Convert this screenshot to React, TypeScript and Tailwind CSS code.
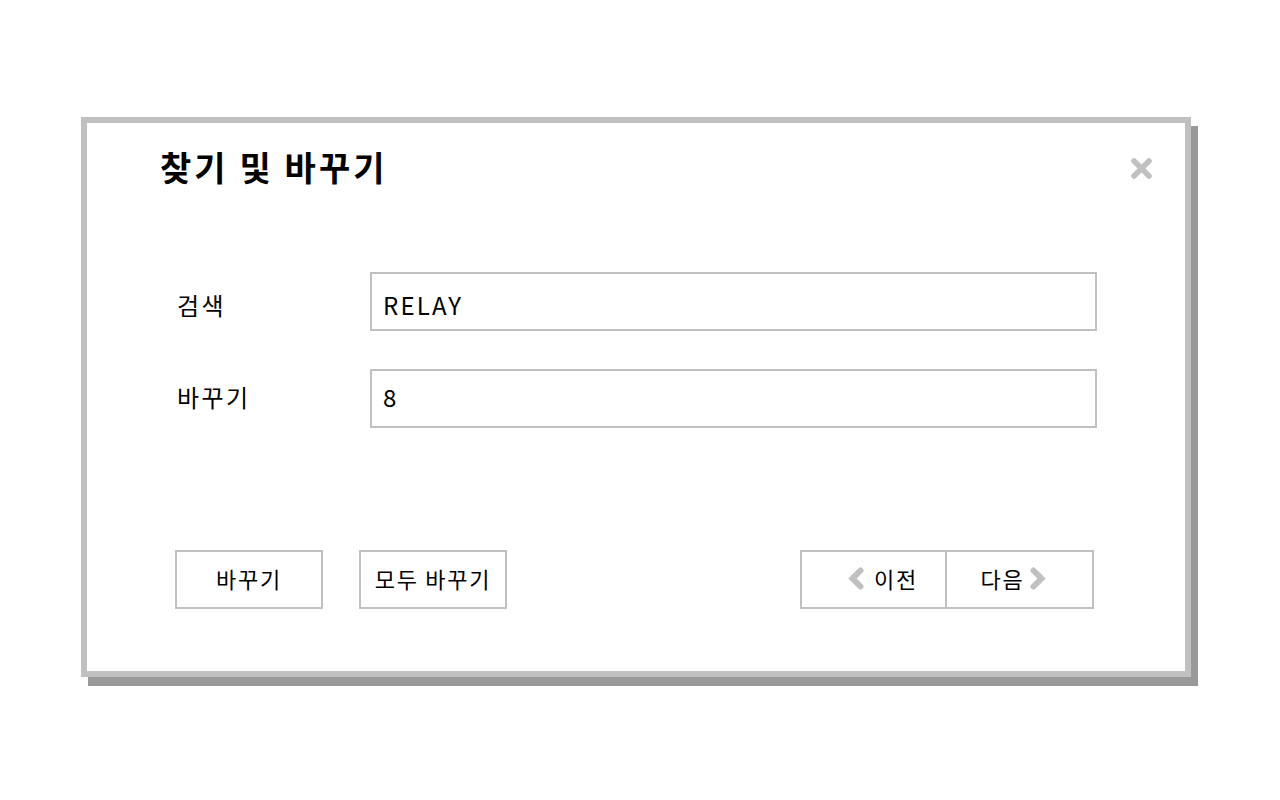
const font = { fontFamily: '"Noto Sans CJK KR", "Noto Sans", sans-serif' };

function Field({ label, value, low }: { label: string; value: string; low?: boolean }) {
  const nudge = low ? 'pt-[7px]' : 'pb-[3px]';
  return (
    <div className="flex items-center">
      <div className={`w-[283px] pl-[90px] text-[24px] leading-[30px] tracking-[0.1em] text-black ${nudge}`}>
        {label}
      </div>
      <div
        className={`flex h-[59px] w-[727px] items-center border-2 border-[#c0c0c0] px-[11px] text-[24px] tracking-[0.09em] text-black ${nudge}`}
      >
        {value}
      </div>
    </div>
  );
}

function Chevron({ dir }: { dir: 'left' | 'right' }) {
  return (
    <svg width="17" height="23" viewBox="0 0 17 23" className="shrink-0">
      <path
        d={dir === 'left' ? 'M13.5 3.5 L5.5 11.5 L13.5 19.5' : 'M3.5 3.5 L11.5 11.5 L3.5 19.5'}
        fill="none"
        stroke="#c0c0c0"
        strokeWidth="6"
        strokeLinecap="round"
      />
    </svg>
  );
}

export default function App() {
  return (
    <div className="min-h-[800px] bg-white pl-[81px] pt-[117px]" style={font}>
      <div className="relative h-[560px] w-[1110px] border-[6px] border-[#c0c0c0] bg-white shadow-[7px_9px_0_#999999]">
        <h1 className="pl-[73px] pt-[24px] text-[34px] font-bold leading-[40px] tracking-[0.09em] text-black">
          찾기 및 바꾸기
        </h1>
        <button className="absolute right-[33px] top-[35px]">
          <svg width="21" height="21" viewBox="0 0 21 21">
            <path d="M3 3 L18 18 M18 3 L3 18" stroke="#c0c0c0" strokeWidth="5.5" strokeLinecap="round" />
          </svg>
        </button>

        <div className="mt-[85px] flex flex-col gap-[38px]">
          <Field label="검색" value="RELAY" low />
          <Field label="바꾸기" value="8" />
        </div>

        <div className="mt-[122px] flex items-center pl-[88px] pr-[91px] text-[22px] tracking-[0.08em] text-black">
          <button className="h-[59px] w-[148px] border-2 border-[#c0c0c0] pb-[3px]">바꾸기</button>
          <button className="ml-[36px] h-[59px] w-[148px] border-2 border-[#c0c0c0] pb-[3px]">모두 바꾸기</button>
          <div className="ml-auto flex h-[59px] border-2 border-[#c0c0c0]">
            <button className="flex w-[145px] items-center justify-center gap-[10px] border-r-2 border-[#c0c0c0] pb-[3px] pl-[18px]">
              <Chevron dir="left" />
              <span>이전</span>
            </button>
            <button className="flex w-[145px] items-center justify-center gap-[5px] pb-[3px] pr-[12px]">
              <span>다음</span>
              <Chevron dir="right" />
            </button>
          </div>
        </div>
      </div>
    </div>
  );
}
